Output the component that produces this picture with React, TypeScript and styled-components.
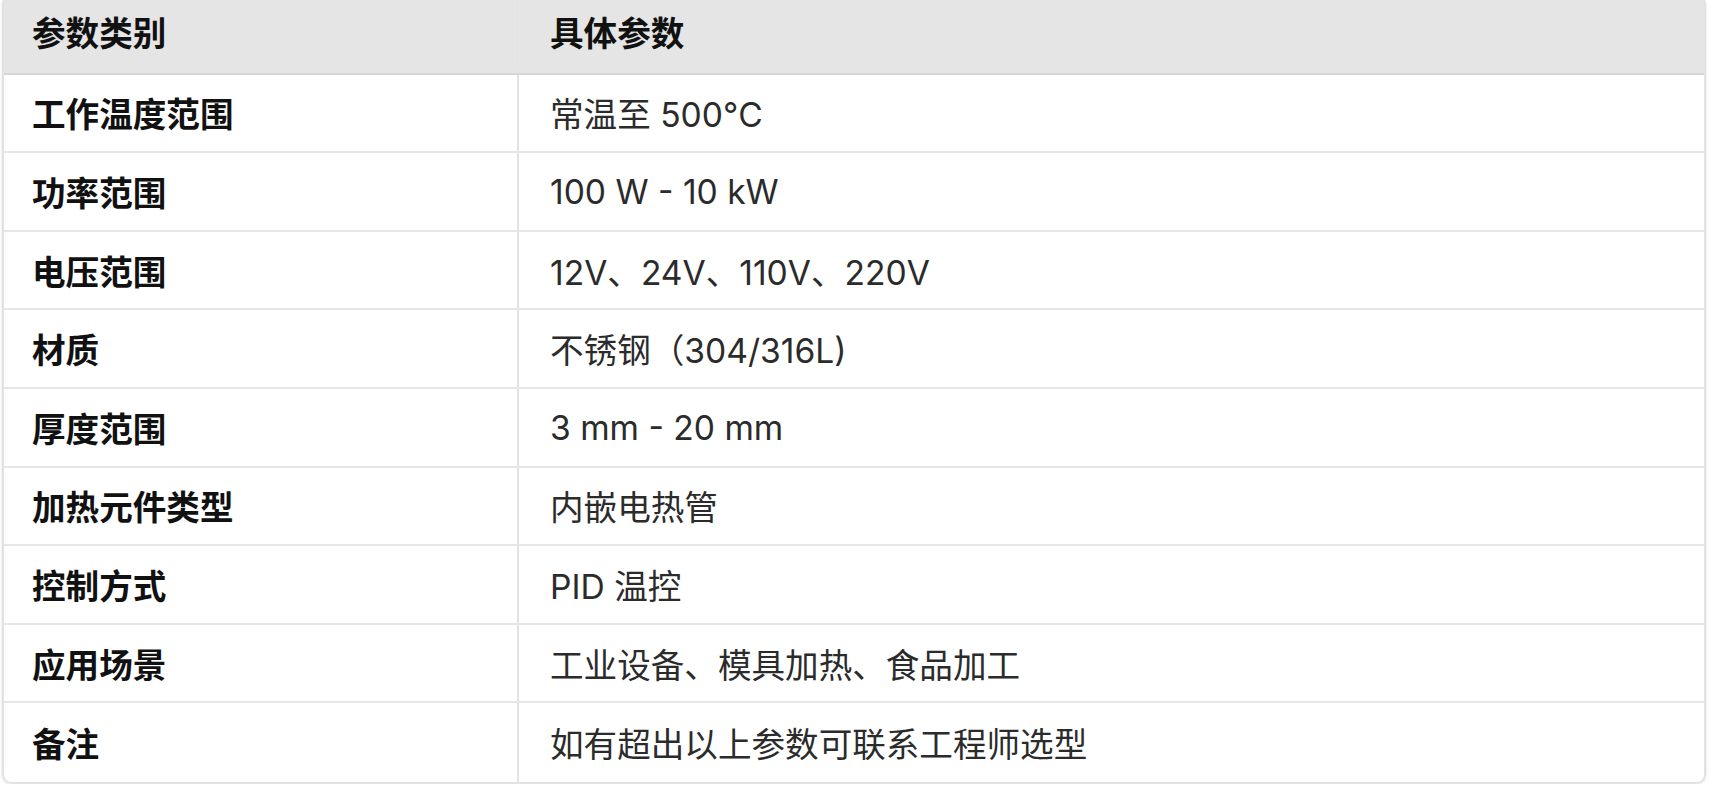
import React from 'react'
import styled, {createGlobalStyle} from 'styled-components'

const GlobalStyle = createGlobalStyle`
    html, body {
        margin: 0;
        padding: 0;
        background: #fff;
        overflow: hidden;
    }
`

const rows: [string, string][] = [
    ['工作温度范围', '常温至 500°C'],
    ['功率范围', '100 W - 10 kW'],
    ['电压范围', '12V、24V、110V、220V'],
    ['材质', '不锈钢（304/316L)'],
    ['厚度范围', '3 mm - 20 mm'],
    ['加热元件类型', '内嵌电热管'],
    ['控制方式', 'PID 温控'],
    ['应用场景', '工业设备、模具加热、食品加工'],
    ['备注', '如有超出以上参数可联系工程师选型'],
]

const TableBox = styled.div`
    box-sizing: border-box;
    width: 1704px;
    margin: -6px 0 0 2px;
    border: 2px solid #e2e2e2;
    border-radius: 10px;
    overflow: hidden;
    box-shadow: 0 1px 3px rgba(0, 0, 0, 0.12);
    font-family: Inter, 'Noto Sans CJK SC', sans-serif;
    font-size: 33.6px;
`

const Row = styled.div<{head?: boolean}>`
    display: grid;
    grid-template-columns: 515px 1fr;
    height: 78.6px;
    padding-bottom: ${({head}) => (head ? '6px' : '0')};
    background: ${({head}) => (head ? '#e5e5e5' : '#fff')};
    border-bottom: 2px solid ${({head}) => (head ? '#d6d6d6' : '#e6e6e6')};
    box-sizing: border-box;
    &:last-child {
        border-bottom: none;
    }
`

const Cell = styled.div<{bold?: boolean; first?: boolean}>`
    display: flex;
    align-items: center;
    padding-left: ${({first}) => (first ? '28px' : '31px')};
    border-right: ${({first}) => (first ? '2px solid #e3e3e3' : 'none')};
    font-weight: ${({bold}) => (bold ? 700 : 400)};
    color: ${({bold}) => (bold ? '#111' : '#2b2b2b')};
    white-space: nowrap;
`

export default function App() {
    return (
        <>
            <GlobalStyle />
            <TableBox>
                <Row head>
                    <Cell first bold>参数类别</Cell>
                    <Cell bold>具体参数</Cell>
                </Row>
                {rows.map(([name, value]) => (
                    <Row key={name}>
                        <Cell first bold>{name}</Cell>
                        <Cell>{value}</Cell>
                    </Row>
                ))}
            </TableBox>
        </>
    )
}
